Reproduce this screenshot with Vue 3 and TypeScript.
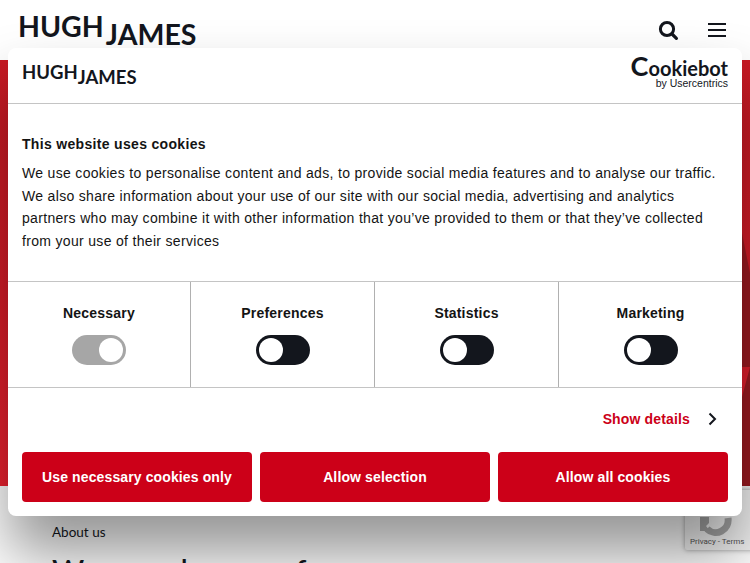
<script setup lang="ts">
interface Category {
  name: string
  locked?: boolean
}

const categories: Category[] = [
  { name: 'Necessary', locked: true },
  { name: 'Preferences' },
  { name: 'Statistics' },
  { name: 'Marketing' },
]
</script>

<template>
  <div class="page">
    <header class="site-header">
      <div class="site-logo"><span class="hugh">HUGH</span><span class="james">JAMES</span></div>
      <div class="site-tools">
        <svg class="search" width="22" height="22" viewBox="0 0 22 22" fill="none" stroke="#13161d">
          <circle cx="10" cy="10" r="6.6" stroke-width="3" />
          <path d="M15 15l4.400 4.400" stroke-width="3.200" stroke-linecap="round" />
        </svg>
        <div class="burger"><i></i><i></i><i></i></div>
      </div>
    </header>
    <section class="hero"></section>
    <section class="about">
      <p class="about-label">About us</p>
      <h2 class="about-title">We are a lawyer of</h2>
    </section>

    <div class="recaptcha">
      <div class="recaptcha-icon">
        <svg width="40" height="40" viewBox="0 0 40 40" fill="none">
          <path d="M31 22a12.500 12.500 0 0 1-21 11" stroke="#a6a6a6" stroke-width="7" />
          <path d="M3 21h9v6l-3 3 4 5H3z" fill="#a6a6a6" />
          <path d="M3 14h7v6H3z" fill="#4a86e8" />
          <path d="M25 14h11v6H25z" fill="#4a86e8" />
        </svg>
      </div>
      <div class="recaptcha-links">Privacy - Terms</div>
    </div>

    <div class="dialog">
      <div class="dialog-top">
        <div class="dialog-logo"><span class="hugh">HUGH</span><span class="james">JAMES</span></div>
        <div class="cookiebot">
          <div class="cookiebot-name"><span class="big-c">C</span>ookiebot</div>
          <div class="cookiebot-sub">by Usercentrics</div>
        </div>
      </div>
      <div class="dialog-body">
        <h3>This website uses cookies</h3>
        <p>We use cookies to personalise content and ads, to provide social media features and to analyse our traffic. We also share information about your use of our site with our social media, advertising and analytics partners who may combine it with other information that you’ve provided to them or that they’ve collected from your use of their services</p>
      </div>
      <div class="cats">
        <div v-for="cat in categories" :key="cat.name" class="cat">
          <div class="cat-name">{{ cat.name }}</div>
          <div class="toggle" :class="{ locked: cat.locked }"><span></span></div>
        </div>
      </div>
      <div class="details">
        <span>Show details</span>
        <svg width="9" height="14" viewBox="0 0 9 14" fill="none" stroke="#13161d" stroke-width="2">
          <path d="M1.500 1.500 7 7l-5.500 5.500" />
        </svg>
      </div>
      <div class="actions">
        <button>Use necessary cookies only</button>
        <button>Allow selection</button>
        <button>Allow all cookies</button>
      </div>
    </div>
  </div>
</template>

<style scoped>
.page {
  position: relative;
  width: 750px;
  height: 563px;
  overflow: hidden;
  background: #fff;
  font-family: "Liberation Sans", Arial, sans-serif;
  color: #141414;
}
.site-header {
  height: 60px;
  display: flex;
  justify-content: space-between;
  align-items: flex-start;
  padding: 0 24px 0 18px;
  box-sizing: border-box;
}
.site-logo {
  display: flex;
  font-family: Lato, sans-serif;
  font-weight: 700;
  color: #13161d;
  padding-top: 8px;
}
.site-logo .hugh { font-size: 28.5px; line-height: 36px; }
.site-logo .james { font-size: 28.5px; line-height: 36px; margin-top: 8px; margin-left: 2px; }
.site-tools {
  display: flex;
  align-items: center;
  gap: 29px;
  padding-top: 19px;
}
.burger { display: flex; flex-direction: column; gap: 4px; width: 18px; }
.burger i { display: block; height: 2px; background: #13161d; }
.hero {
  position: relative;
  height: 426px;
  /* brighter towards the bottom, the dialog shadow pulls it back down */
  background: linear-gradient(180deg, #c81a24 0%, #d81c28 55%, #ee2230 100%);
}
/* dark wedge of the hero artwork, only its edge shows beside the dialog */
.hero::after {
  content: "";
  position: absolute;
  right: 0;
  top: 173px;
  width: 8px;
  height: 253px;
  background: #9c1a20;
  clip-path: polygon(0 0, 8px 40px, 8px 253px, 0 253px, 0 164px, 8px 134px, 0 134px);
}
.about { padding: 37px 52px 0; }
.about-label {
  margin: 0;
  font-family: Lato, sans-serif;
  font-size: 13.5px;
  line-height: 18px;
  color: #13161d;
}
.about-title {
  margin: 10px 0 0;
  font-family: Lato, sans-serif;
  font-size: 31px;
  line-height: 38px;
  font-weight: 500;
  color: #13161d;
  white-space: nowrap;
}
.recaptcha {
  position: absolute;
  left: 685px;
  top: 490px;
  width: 70px;
  height: 60px;
  background: #f4f4f4;
  box-shadow: 0 0 5px rgba(0, 0, 0, 0.4);
  border-radius: 2px;
}
.recaptcha-icon { height: 46px; padding: 6px 0 0 12px; box-sizing: border-box; }
.recaptcha-links {
  font-family: Roboto, sans-serif;
  font-size: 8px;
  color: #555;
  padding-left: 5px;
  line-height: 12px;
}
.dialog {
  position: absolute;
  left: 8px;
  top: 48px;
  width: 734px;
  height: 468px;
  background: #fff;
  border-radius: 8px;
  box-shadow: 0 38px 60px rgba(0, 0, 0, 0.42);
  display: flex;
  flex-direction: column;
}
.dialog-top {
  height: 56px;
  flex: none;
  box-sizing: border-box;
  display: flex;
  justify-content: space-between;
  padding: 0 14px;
  border-bottom: 1px solid #c4c4c4;
}
.dialog-logo {
  display: flex;
  font-family: Lato, sans-serif;
  font-weight: 700;
  color: #13161d;
  padding-top: 12px;
}
.dialog-logo .hugh { font-size: 18.5px; line-height: 24px; }
.dialog-logo .james { font-size: 18.5px; line-height: 24px; margin-top: 5px; }
.cookiebot { padding-top: 11px; text-align: right; color: #13161d; }
.cookiebot-name {
  font-family: Lato, sans-serif;
  font-size: 20px;
  line-height: 19px;
  font-weight: 700;
}
.big-c { font-size: 27px; line-height: 0; }
.cookiebot-sub { font-size: 10.5px; line-height: 10px; }
.dialog-body { padding: 29px 14px 0; height: 177px; box-sizing: border-box; flex: none; }
.dialog-body h3 {
  margin: 0 0 7px;
  font-size: 14px;
  line-height: 22px;
  font-weight: 700;
  letter-spacing: 0.32px;
}
.dialog-body p {
  margin: 0;
  font-size: 14px;
  line-height: 22.5px;
  letter-spacing: 0.32px;
}
.cats {
  flex: none;
  display: grid;
  grid-template-columns: 183px 184px 184px 183px;
  height: 107px;
  border-top: 1px solid #c4c4c4;
  border-bottom: 1px solid #c4c4c4;
  box-sizing: border-box;
}
.cat {
  text-align: center;
  padding-top: 20px;
  border-right: 1px solid #b0b0b0;
}
.cat:last-child { border-right: 0; }
.cat-name { font-size: 14px; line-height: 22px; font-weight: 700; letter-spacing: 0.2px; }
.toggle {
  width: 54px;
  height: 30px;
  margin: 11px auto 0;
  background: #13161d;
  border-radius: 15px;
  padding: 3px;
  box-sizing: border-box;
  display: flex;
}
.toggle span { width: 24px; height: 24px; border-radius: 50%; background: #fff; }
.toggle.locked { background: #a6a6a6; justify-content: flex-end; }
.details {
  flex: none;
  height: 64px;
  padding: 0 25px 2px 0;
  box-sizing: border-box;
  display: flex;
  align-items: center;
  justify-content: flex-end;
  gap: 18px;
  font-size: 14px;
  font-weight: 700;
  letter-spacing: 0.15px;
  color: #cc0018;
}
.actions {
  flex: none;
  display: grid;
  grid-template-columns: repeat(3, 1fr);
  gap: 8px;
  padding: 0 14px;
}
.actions button {
  height: 50px;
  border: 0;
  border-radius: 4px;
  background: #cc0018;
  color: #fff;
  font-family: inherit;
  font-size: 14px;
  font-weight: 700;
  letter-spacing: 0.12px;
}
</style>
